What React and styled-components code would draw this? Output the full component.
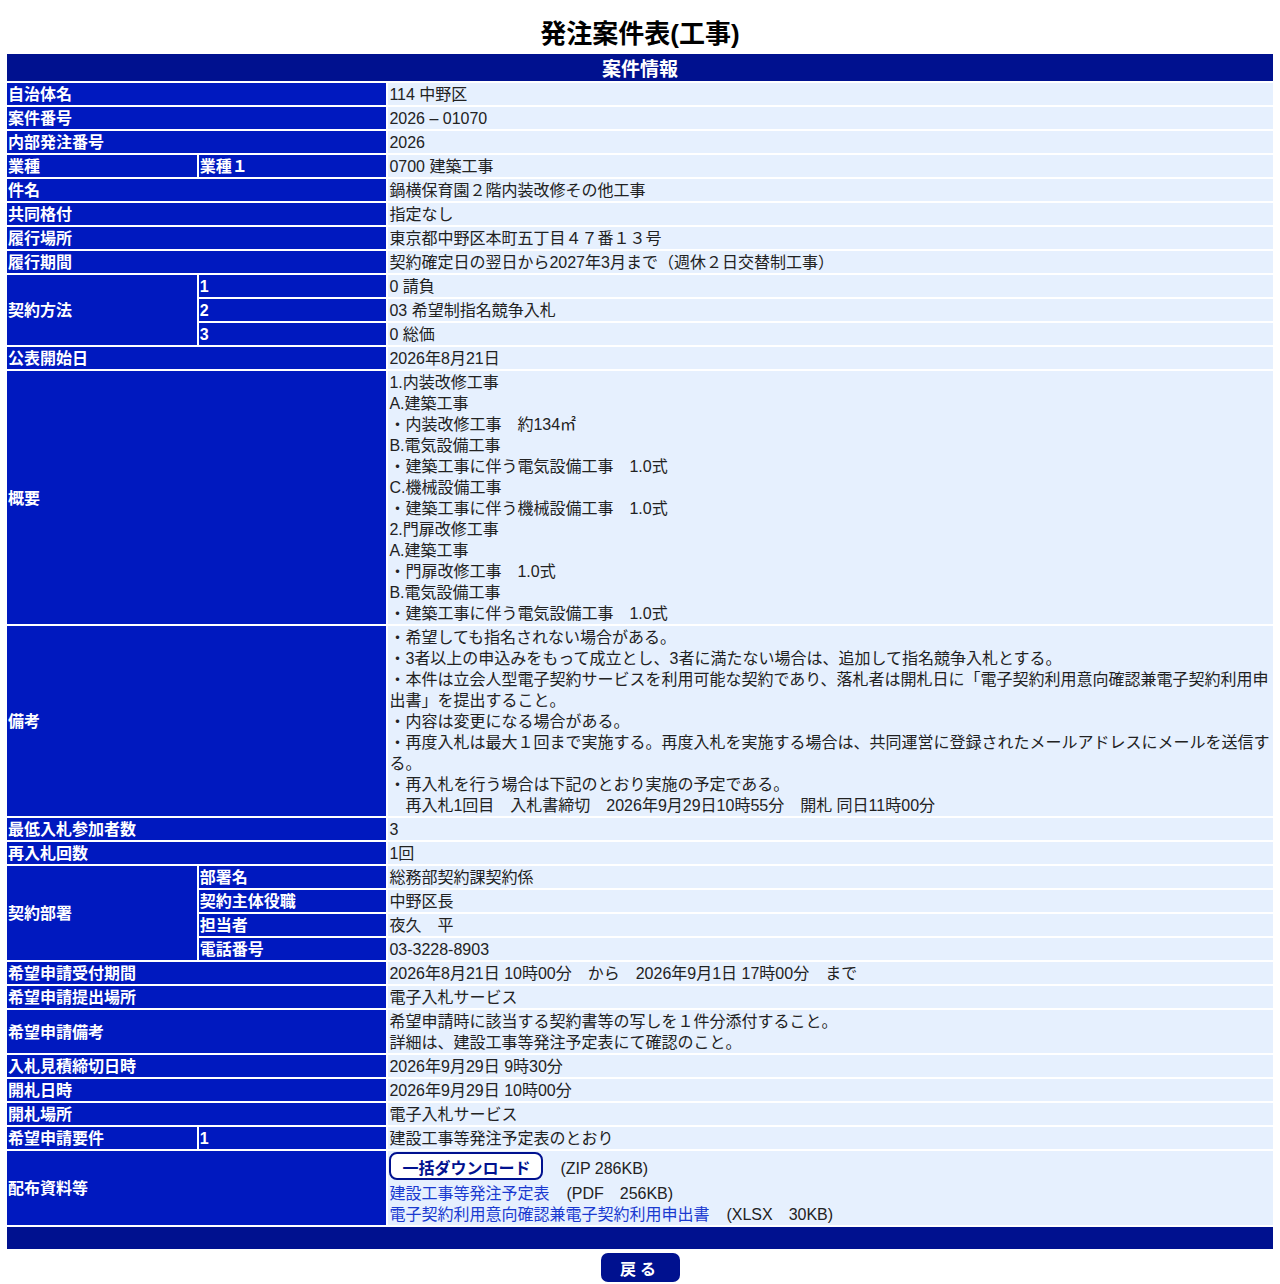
import styled, { createGlobalStyle } from 'styled-components';

const GlobalStyle = createGlobalStyle`
  body {
    margin: 0;
    background: #ffffff;
    font-family: "Liberation Sans", Arial, "Noto Sans CJK JP", sans-serif;
    color: #222;
  }
`;

const Page = styled.div`
  padding: 17px 5px 2px 5px;
`;

const Title = styled.h1`
  margin: 0 0 1px 0;
  font-size: 26px;
  line-height: 34px;
  font-weight: bold;
  color: #000;
  text-align: center;
`;

const Table = styled.table`
  width: 100%;
  border-collapse: separate;
  border-spacing: 2px;
  font-size: 16px;
`;

const HeadCell = styled.th`
  background: #00118f;
  color: #fff;
  font-size: 19px;
  font-weight: bold;
  height: ${(p) => (p.$empty ? '22px' : '26px')};
  padding: 0;
  text-align: center;
`;

const Label = styled.th`
  background: #0019bf;
  color: #fff;
  font-weight: bold;
  text-align: left;
  vertical-align: middle;
  padding: 1px 1px 0 1px;
  line-height: 21px;
  width: ${(p) => (p.$sub ? '186px' : '188px')};
`;

const Value = styled.td`
  background: #e6f0fe;
  color: #222;
  text-align: left;
  vertical-align: middle;
  padding: 1px 1px 0 1px;
  line-height: 21px;
  width: 884px;
  white-space: pre-wrap;
`;

const DownloadButton = styled.button`
  font: inherit;
  font-weight: bold;
  color: #00118f;
  background: #fff;
  border: 2px solid #00118f;
  border-radius: 8px;
  padding: 0 11px;
  height: 28px;
  margin: 0 0 1px 0;
  letter-spacing: 0;
  cursor: pointer;
`;

const FileLine = styled.div`
  line-height: ${(p) => (p.$tall ? '29px' : '21px')};
`;

const FileLink = styled.a`
  color: #1a3ad0;
  text-decoration: none;
`;

const Size = styled.span`
  margin-left: ${(p) => p.$gap || '17px'};
`;

const Footer = styled.div`
  display: flex;
  justify-content: center;
  padding-top: 2px;
`;

const BackButton = styled.button`
  font: inherit;
  font-size: 16px;
  font-weight: bold;
  color: #fff;
  background: #00118f;
  border: none;
  border-radius: 7px;
  width: 79px;
  height: 29px;
  letter-spacing: 4px;
  cursor: pointer;
`;

const gaiyou = `1.内装改修工事
A.建築工事
・内装改修工事　約134㎡
B.電気設備工事
・建築工事に伴う電気設備工事　1.0式
C.機械設備工事
・建築工事に伴う機械設備工事　1.0式
2.門扉改修工事
A.建築工事
・門扉改修工事　1.0式
B.電気設備工事
・建築工事に伴う電気設備工事　1.0式`;

const bikou = `・希望しても指名されない場合がある。
・3者以上の申込みをもって成立とし、3者に満たない場合は、追加して指名競争入札とする。
・本件は立会人型電子契約サービスを利用可能な契約であり、落札者は開札日に「電子契約利用意向確認兼電子契約利用申出書」を提出すること。
・内容は変更になる場合がある。
・再度入札は最大１回まで実施する。再度入札を実施する場合は、共同運営に登録されたメールアドレスにメールを送信する。
・再入札を行う場合は下記のとおり実施の予定である。
　再入札1回目　入札書締切　2026年9月29日10時55分　開札 同日11時00分`;

const Row = ({ label, value }) => (
  <tr>
    <Label colSpan={2}>{label}</Label>
    <Value>{value}</Value>
  </tr>
);

export default function App() {
  return (
    <Page>
      <GlobalStyle />
      <Title>発注案件表(工事)</Title>
      <Table>
        <tbody>
          <tr>
            <HeadCell colSpan={3}>案件情報</HeadCell>
          </tr>
          <Row label="自治体名" value="114 中野区" />
          <Row label="案件番号" value="2026 – 01070" />
          <Row label="内部発注番号" value="2026" />
          <tr>
            <Label>業種</Label>
            <Label $sub>業種１</Label>
            <Value>0700 建築工事</Value>
          </tr>
          <Row label="件名" value="鍋横保育園２階内装改修その他工事" />
          <Row label="共同格付" value="指定なし" />
          <Row label="履行場所" value="東京都中野区本町五丁目４７番１３号" />
          <Row label="履行期間" value="契約確定日の翌日から2027年3月まで（週休２日交替制工事）" />
          <tr>
            <Label rowSpan={3}>契約方法</Label>
            <Label $sub>1</Label>
            <Value>0 請負</Value>
          </tr>
          <tr>
            <Label $sub>2</Label>
            <Value>03 希望制指名競争入札</Value>
          </tr>
          <tr>
            <Label $sub>3</Label>
            <Value>0 総価</Value>
          </tr>
          <Row label="公表開始日" value="2026年8月21日" />
          <Row label="概要" value={gaiyou} />
          <Row label="備考" value={bikou} />
          <Row label="最低入札参加者数" value="3" />
          <Row label="再入札回数" value="1回" />
          <tr>
            <Label rowSpan={4}>契約部署</Label>
            <Label $sub>部署名</Label>
            <Value>総務部契約課契約係</Value>
          </tr>
          <tr>
            <Label $sub>契約主体役職</Label>
            <Value>中野区長</Value>
          </tr>
          <tr>
            <Label $sub>担当者</Label>
            <Value>夜久　平</Value>
          </tr>
          <tr>
            <Label $sub>電話番号</Label>
            <Value>03-3228-8903</Value>
          </tr>
          <Row label="希望申請受付期間" value="2026年8月21日 10時00分　から　2026年9月1日 17時00分　まで" />
          <Row label="希望申請提出場所" value="電子入札サービス" />
          <Row
            label="希望申請備考"
            value={'希望申請時に該当する契約書等の写しを１件分添付すること。\n詳細は、建設工事等発注予定表にて確認のこと。'}
          />
          <Row label="入札見積締切日時" value="2026年9月29日 9時30分" />
          <Row label="開札日時" value="2026年9月29日 10時00分" />
          <Row label="開札場所" value="電子入札サービス" />
          <tr>
            <Label>希望申請要件</Label>
            <Label $sub>1</Label>
            <Value>建設工事等発注予定表のとおり</Value>
          </tr>
          <tr>
            <Label colSpan={2}>配布資料等</Label>
            <Value>
              <FileLine $tall>
                <DownloadButton type="button">一括ダウンロード</DownloadButton>
                <Size $gap="17px">(ZIP 286KB)</Size>
              </FileLine>
              <FileLine>
                <FileLink href="#">建設工事等発注予定表</FileLink>
                <Size>(PDF　256KB)</Size>
              </FileLine>
              <FileLine>
                <FileLink href="#">電子契約利用意向確認兼電子契約利用申出書</FileLink>
                <Size>(XLSX　30KB)</Size>
              </FileLine>
            </Value>
          </tr>
          <tr>
            <HeadCell colSpan={3} $empty />
          </tr>
        </tbody>
      </Table>
      <Footer>
        <BackButton type="button">戻る</BackButton>
      </Footer>
    </Page>
  );
}
